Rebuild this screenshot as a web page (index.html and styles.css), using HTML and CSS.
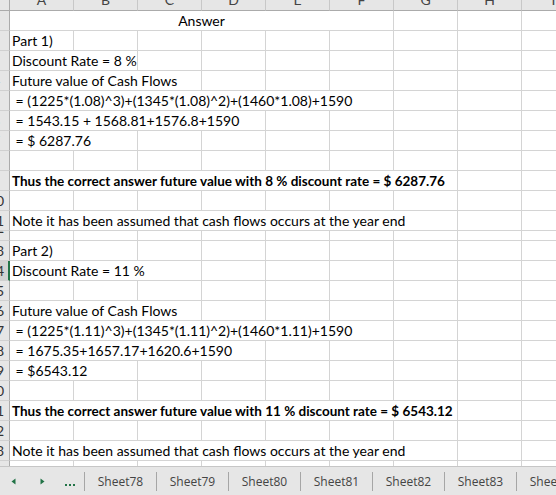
FILE: index.html
```html
<!DOCTYPE html>
<html>
<head>
<meta charset="utf-8">
<link rel="stylesheet" href="styles.css">
</head>
<body>
<div class="sheet">
  <div class="colhead">
    <div class="corner"></div>
    <div class="ch"><span>A</span></div><div class="ch"><span>B</span></div><div class="ch"><span>C</span></div><div class="ch"><span>D</span></div><div class="ch"><span>E</span></div><div class="ch"><span>F</span></div><div class="ch"><span>G</span></div><div class="ch"><span>H</span></div><div class="ch"><span>I</span></div>
  </div>
  <div class="row"><div class="rh"><span>1</span></div><div class="c s6 center">Answer</div><div class="c"></div><div class="c"></div><div class="c"></div></div>
  <div class="row"><div class="rh"><span>2</span></div><div class="c">Part 1)</div><div class="c"></div><div class="c"></div><div class="c"></div><div class="c"></div><div class="c"></div><div class="c"></div><div class="c"></div><div class="c"></div></div>
  <div class="row"><div class="rh"><span>3</span></div><div class="c s2">Discount Rate = 8 %</div><div class="c"></div><div class="c"></div><div class="c"></div><div class="c"></div><div class="c"></div><div class="c"></div><div class="c"></div></div>
  <div class="row"><div class="rh"><span>4</span></div><div class="c s3">Future value of Cash Flows</div><div class="c"></div><div class="c"></div><div class="c"></div><div class="c"></div><div class="c"></div><div class="c"></div></div>
  <div class="row"><div class="rh"><span>5</span></div><div class="c s6"> = (1225*(1.08)^3)+(1345*(1.08)^2)+(1460*1.08)+1590</div><div class="c"></div><div class="c"></div><div class="c"></div></div>
  <div class="row"><div class="rh"><span>6</span></div><div class="c s4"> = 1543.15 + 1568.81+1576.8+1590</div><div class="c"></div><div class="c"></div><div class="c"></div><div class="c"></div><div class="c"></div></div>
  <div class="row"><div class="rh"><span>7</span></div><div class="c s2"> = $ 6287.76</div><div class="c"></div><div class="c"></div><div class="c"></div><div class="c"></div><div class="c"></div><div class="c"></div><div class="c"></div></div>
  <div class="row"><div class="rh"><span>8</span></div><div class="c"></div><div class="c"></div><div class="c"></div><div class="c"></div><div class="c"></div><div class="c"></div><div class="c"></div><div class="c"></div><div class="c"></div></div>
  <div class="row"><div class="rh"><span>9</span></div><div class="c s7 b">Thus the correct answer future value with 8 % discount rate = $ 6287.76</div><div class="c"></div><div class="c"></div></div>
  <div class="row"><div class="rh"><span>10</span></div><div class="c"></div><div class="c"></div><div class="c"></div><div class="c"></div><div class="c"></div><div class="c"></div><div class="c"></div><div class="c"></div><div class="c"></div></div>
  <div class="row"><div class="rh"><span>11</span></div><div class="c s7">Note it has been assumed that cash flows occurs at the year end</div><div class="c"></div><div class="c"></div></div>
  <div class="row short"><div class="rh"><span>12</span></div><div class="c"></div><div class="c"></div><div class="c"></div><div class="c"></div><div class="c"></div><div class="c"></div><div class="c"></div><div class="c"></div><div class="c"></div></div>
  <div class="row"><div class="rh"><span>13</span></div><div class="c">Part 2)</div><div class="c"></div><div class="c"></div><div class="c"></div><div class="c"></div><div class="c"></div><div class="c"></div><div class="c"></div><div class="c"></div></div>
  <div class="row"><div class="rh sel"><span>14</span></div><div class="c s3">Discount Rate = 11 %</div><div class="c"></div><div class="c"></div><div class="c"></div><div class="c"></div><div class="c"></div><div class="c"></div></div>
  <div class="row"><div class="rh"><span>15</span></div><div class="c"></div><div class="c"></div><div class="c"></div><div class="c"></div><div class="c"></div><div class="c"></div><div class="c"></div><div class="c"></div><div class="c"></div></div>
  <div class="row"><div class="rh"><span>16</span></div><div class="c s3">Future value of Cash Flows</div><div class="c"></div><div class="c"></div><div class="c"></div><div class="c"></div><div class="c"></div><div class="c"></div></div>
  <div class="row"><div class="rh"><span>17</span></div><div class="c s6"> = (1225*(1.11)^3)+(1345*(1.11)^2)+(1460*1.11)+1590</div><div class="c"></div><div class="c"></div><div class="c"></div></div>
  <div class="row"><div class="rh"><span>18</span></div><div class="c s4"> = 1675.35+1657.17+1620.6+1590</div><div class="c"></div><div class="c"></div><div class="c"></div><div class="c"></div><div class="c"></div></div>
  <div class="row"><div class="rh"><span>19</span></div><div class="c s2"> = $6543.12</div><div class="c"></div><div class="c"></div><div class="c"></div><div class="c"></div><div class="c"></div><div class="c"></div><div class="c"></div></div>
  <div class="row"><div class="rh"><span>20</span></div><div class="c"></div><div class="c"></div><div class="c"></div><div class="c"></div><div class="c"></div><div class="c"></div><div class="c"></div><div class="c"></div><div class="c"></div></div>
  <div class="row"><div class="rh"><span>21</span></div><div class="c s7 b">Thus the correct answer future value with 11 % discount rate = $ 6543.12</div><div class="c"></div><div class="c"></div></div>
  <div class="row"><div class="rh"><span>22</span></div><div class="c"></div><div class="c"></div><div class="c"></div><div class="c"></div><div class="c"></div><div class="c"></div><div class="c"></div><div class="c"></div><div class="c"></div></div>
  <div class="row"><div class="rh"><span>23</span></div><div class="c s7">Note it has been assumed that cash flows occurs at the year end</div><div class="c"></div><div class="c"></div></div>
  <div class="row"><div class="rh"><span>24</span></div><div class="c"></div><div class="c"></div><div class="c"></div><div class="c"></div><div class="c"></div><div class="c"></div><div class="c"></div><div class="c"></div><div class="c"></div></div>
</div>
<div class="tabs">
  <svg class="arrow first" width="5" height="7" viewBox="0 0 5 7"><polygon points="4.5,0.5 4.5,6.5 0.5,3.5" fill="#217346"/></svg>
  <svg class="arrow second" width="5" height="7" viewBox="0 0 5 7"><polygon points="0.5,0.5 0.5,6.5 4.5,3.5" fill="#217346"/></svg>
  <svg class="dots" width="11" height="12" viewBox="0 0 11 12"><rect x="0" y="9" width="2" height="2" fill="#217346"/><rect x="4" y="9" width="2" height="2" fill="#217346"/><rect x="8" y="9" width="2" height="2" fill="#217346"/></svg>
  <div class="sep"></div><div class="tab">Sheet78</div>
  <div class="sep"></div><div class="tab">Sheet79</div>
  <div class="sep"></div><div class="tab">Sheet80</div>
  <div class="sep"></div><div class="tab">Sheet81</div>
  <div class="sep"></div><div class="tab">Sheet82</div>
  <div class="sep"></div><div class="tab">Sheet83</div>
  <div class="sep"></div><div class="tab">Sheet84</div>
</div>
</body>
</html>
```
FILE: styles.css
```css
html, body {
  margin: 0;
  padding: 0;
  background: #fff;
}
body {
  width: 556px;
  height: 495px;
  overflow: hidden;
  font-family: Lato, "Liberation Sans", sans-serif;
}
.sheet {
  display: flex;
  flex-direction: column;
  height: 466px;
  overflow: hidden;
}
.colhead {
  display: flex;
  height: 11px;
  flex-shrink: 0;
}
.corner {
  width: 10px;
  height: 11px;
  flex-shrink: 0;
  box-sizing: border-box;
  background: #e6e6e6;
  border-right: 1px solid #ababab;
  border-bottom: 1px solid #ababab;
}
.ch {
  width: 64px;
  height: 11px;
  flex-shrink: 0;
  box-sizing: border-box;
  background: #e6e6e6;
  border-right: 1px solid #c8c8c8;
  border-bottom: 1px solid #ababab;
  overflow: hidden;
  text-align: center;
  font-size: 14px;
  color: #444;
}
.ch span {
  display: block;
  line-height: 20px;
  margin-top: -10px;
}
.row {
  display: flex;
  height: 20px;
  flex-shrink: 0;
}
.row.short {
  height: 10px;
}
.rh {
  width: 10px;
  flex-shrink: 0;
  box-sizing: border-box;
  background: #e6e6e6;
  border-right: 1px solid #ababab;
  border-bottom: 1px solid #d0d0d0;
  overflow: hidden;
  padding-top: 1px;
}
.row.short .rh {
  padding-top: 0;
}
.row.short .rh span {
  line-height: 9px;
  margin-top: -8px;
}
.rh span {
  display: block;
  width: 26px;
  margin-left: -17px;
  text-align: center;
  font-size: 14px;
  line-height: 18px;
  color: #333;
}
.rh.sel {
  background: #d2d2d2;
  border-right: 2px solid #217346;
}
.c {
  width: 64px;
  flex-shrink: 0;
  box-sizing: border-box;
  border-right: 1px solid #d4d4d4;
  border-bottom: 1px solid #d4d4d4;
  font-size: 14px;
  line-height: 18px;
  padding-top: 1px;
  padding-left: 2px;
  white-space: pre;
  overflow: visible;
  color: #000;
}
.s2 { width: 128px; }
.s3 { width: 192px; }
.s4 { width: 256px; }
.s6 { width: 384px; }
.s7 { width: 448px; }
.center {
  text-align: center;
  padding-left: 0;
}
.b {
  font-weight: bold;
  font-size: 13.5px;
}
.tabs {
  height: 29px;
  box-sizing: border-box;
  border-top: 1px solid #c6c6c6;
  background: #e6e6e6;
  display: flex;
  align-items: center;
  font-family: "Open Sans", "Liberation Sans", sans-serif;
  font-size: 12px;
  color: #444;
  white-space: nowrap;
  overflow: hidden;
}
.arrow {
  flex-shrink: 0;
}
.arrow.first {
  margin-left: 11px;
}
.arrow.second {
  margin-left: 24px;
}
.dots {
  flex-shrink: 0;
  margin-left: 20px;
  margin-right: 8px;
}
.sep {
  width: 1px;
  height: 19px;
  background: #a6a6a6;
  flex-shrink: 0;
}
.tab {
  width: 71px;
  flex-shrink: 0;
  text-align: center;
}
```
